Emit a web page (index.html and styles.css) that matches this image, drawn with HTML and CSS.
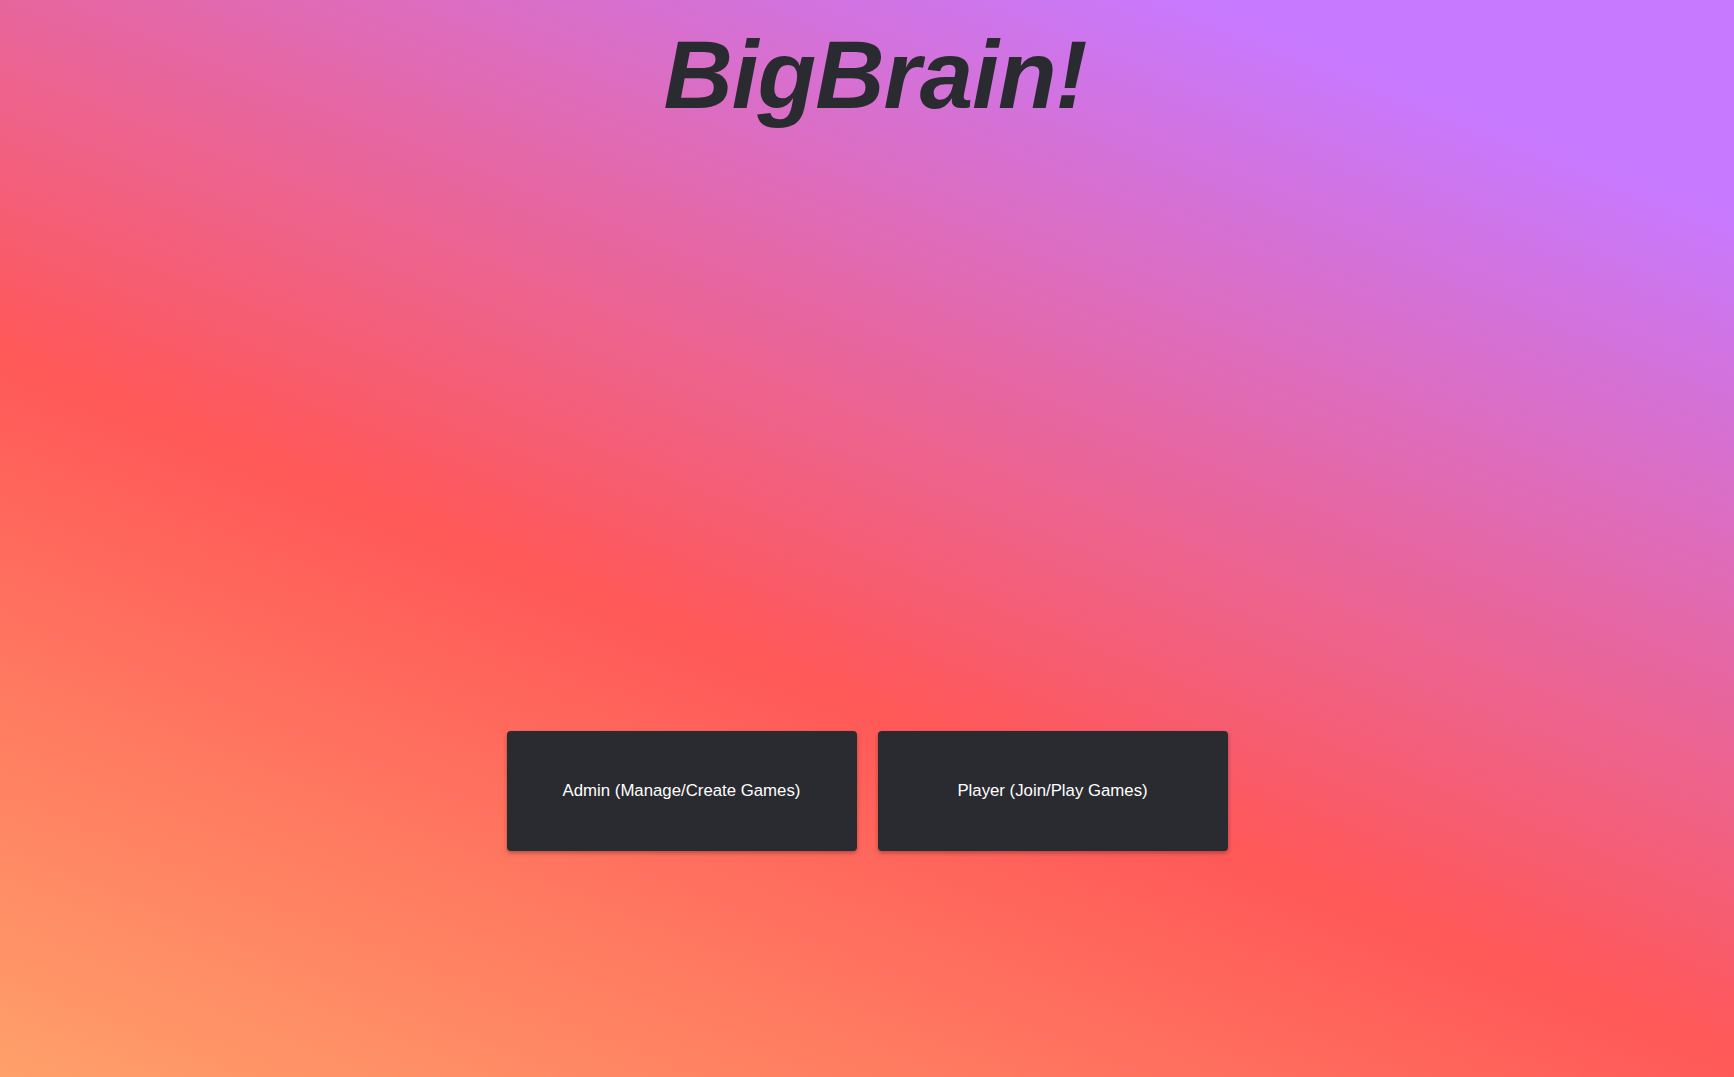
FILE: index.html
```html
<!DOCTYPE html>
<html lang="en">
<head>
<meta charset="utf-8">
<title>BigBrain!</title>
<link rel="stylesheet" href="styles.css">
</head>
<body>
<main class="page">
  <h1 class="title">BigBrain!</h1>
  <div class="actions">
    <button class="action-btn" type="button">Admin (Manage/Create Games)</button>
    <button class="action-btn" type="button">Player (Join/Play Games)</button>
  </div>
</main>
</body>
</html>
```

FILE: styles.css
```css
html, body {
  margin: 0;
  padding: 0;
  height: 100%;
}

body {
  font-family: "Liberation Sans", Arial, Helvetica, sans-serif;
  background: linear-gradient(22deg, #ffa06a 0%, #ff5858 41%, #c779ff 88%);
  min-height: 100vh;
  overflow: hidden;
}

.page {
  display: flex;
  flex-direction: column;
  align-items: center;
  min-height: 100vh;
}

.title {
  margin: 20px 0 0 0;
  padding-left: 16px;
  font-size: 96px;
  line-height: 110px;
  font-weight: bold;
  font-style: italic;
  color: #2a2b30;
  letter-spacing: -1px;
}

.actions {
  display: flex;
  gap: 21px;
  margin-top: 601px;
}

.action-btn {
  width: 350px;
  height: 120px;
  border: none;
  border-radius: 4px;
  background: #2a2b30;
  color: #ffffff;
  font-family: "Liberation Sans", Arial, Helvetica, sans-serif;
  font-size: 16.8px;
  box-shadow: 0 2px 4px rgba(0, 0, 0, 0.3);
  cursor: pointer;
}
```
